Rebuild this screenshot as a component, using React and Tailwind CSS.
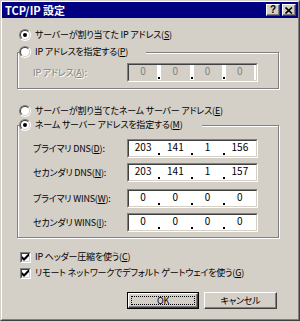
import React from "react"

function Radio({ checked }) {
  return (
    <span className="w-[12px] h-[12px] shrink-0 rounded-full border border-t-[#808080] border-l-[#808080] border-r-white border-b-white flex">
      <span className="flex-1 rounded-full border border-t-[#404040] border-l-[#404040] border-r-[#d4d0c8] border-b-[#d4d0c8] bg-white flex items-center justify-center">
        {checked && <span className="w-[4px] h-[4px] rounded-full bg-black" />}
      </span>
    </span>
  )
}

function Check() {
  return (
    <span className="w-[11px] h-[11px] shrink-0 border border-t-[#808080] border-l-[#808080] border-r-white border-b-white flex">
      <span className="flex-1 border border-t-[#404040] border-l-[#404040] border-r-[#d4d0c8] border-b-[#d4d0c8] bg-white flex items-center justify-center">
        <svg width="7" height="7" viewBox="0 0 7 7">
          <polygon points="0,2 2,4 7,-1 7,2 2,7 0,5" fill="#000" />
        </svg>
      </span>
    </span>
  )
}

function IpField({ parts, disabled }) {
  return (
    <div className="w-[131px] h-[19px] border border-t-[#808080] border-l-[#808080] border-r-white border-b-white text-[10px] tracking-normal">
      <div className="h-full border border-t-[#404040] border-l-[#404040] border-r-[#d4d0c8] border-b-[#d4d0c8] bg-white flex pr-[2px]">
        {parts.map((p, i) => (
          <React.Fragment key={i}>
            {i > 0 && (
              <div className="w-[4px] flex items-end justify-center pb-[1px]">
                <span className="w-[2px] h-[2px] bg-black" />
              </div>
            )}
            <div
              className={
                disabled
                  ? "flex-1 text-center leading-[12px] bg-[#d4d0c8] text-[#808080]"
                  : "flex-1 text-center leading-[12px]"
              }
            >
              {p}
            </div>
          </React.Fragment>
        ))}
      </div>
    </div>
  )
}

function AddrRow({ label, parts, disabled, className = "" }) {
  return (
    <div className={"flex items-center " + className}>
      <span
        className={
          disabled
            ? "w-[94px] leading-[14px] text-[#808080] [text-shadow:1px_1px_0_#fff]"
            : "w-[94px] leading-[14px]"
        }
      >
        {label}
      </span>
      <IpField parts={parts} disabled={disabled} />
    </div>
  )
}

function Button({ children, isDefault, width }) {
  return (
    <div className={"h-[17px] " + width + (isDefault ? " border border-black" : "")}>
      <div className="h-full border border-t-white border-l-white border-r-[#404040] border-b-[#404040] shadow-[inset_-1px_-1px_0_#808080] flex items-center justify-center p-[2px]">
        <div
          className={
            isDefault
              ? "w-full h-full flex items-center justify-center border border-dotted border-black leading-[10px]"
              : "w-full h-full flex items-center justify-center leading-[10px]"
          }
        >
          {children}
        </div>
      </div>
    </div>
  )
}

function CaptionButton({ children }) {
  return (
    <div className="w-[14px] h-[12px] bg-[#d4d0c8] border border-t-white border-l-white border-r-[#404040] border-b-[#404040] shadow-[inset_-1px_-1px_0_#808080] flex items-center justify-center">
      {children}
    </div>
  )
}

export default function App() {
  return (
    <div className="w-[300px] h-[321px] bg-[#d4d0c8] border border-t-[#d4d0c8] border-l-[#d4d0c8] border-r-[#404040] border-b-[#404040] font-['Noto_Sans_CJK_JP',sans-serif] text-[9px] tracking-[-0.2px] text-black [font-feature-settings:'palt']">
      <div className="h-full border border-t-white border-l-white border-r-[#808080] border-b-[#808080] flex flex-col">
        {/* title */}
        <div className="h-[16px] bg-[#000080] flex items-center pl-[3px] pr-[2px]">
          <span className="text-white font-bold text-[11px] tracking-normal leading-[14px] flex-1">TCP/IP 設定</span>
          <div className="flex gap-[2px]">
            <CaptionButton>
              <span className="font-bold text-[10px] leading-[10px] font-['Liberation_Sans',sans-serif]">?</span>
            </CaptionButton>
            <CaptionButton>
              <svg width="8" height="7" viewBox="0 0 8 7">
                <path d="M0.5 0.5 L7 6.5 M7 0.5 L0.5 6.5" stroke="#000" strokeWidth="1.6" />
              </svg>
            </CaptionButton>
          </div>
        </div>

        <div className="flex flex-col pl-[15px]">
          <div className="mt-[10px] pl-[2px] flex items-center gap-[4px] leading-[14px]">
            <Radio checked />
            <span>サーバーが割り当てた IP アドレス(<u>S</u>)</span>
          </div>

          <fieldset className="mt-[3px] w-[262px] border border-[#808080] shadow-[inset_1px_1px_0_#fff,1px_1px_0_#fff] p-0">
            <legend className="ml-[1px] p-0 pr-[18px] bg-[#d4d0c8]">
              <span className="flex items-center gap-[4px] leading-[14px]">
                <Radio />
                <span>IP アドレスを指定する(<u>P</u>)</span>
              </span>
            </legend>
            <div className="pt-[4px] pb-[6px] pl-[15px]">
              <AddrRow label={<>IP アドレス(<u>A</u>):</>} parts={["0", "0", "0", "0"]} disabled />
            </div>
          </fieldset>

          <div className="mt-[15px] pl-[2px] flex items-center gap-[4px] leading-[14px]">
            <Radio />
            <span>サーバーが割り当てたネーム サーバー アドレス(<u>E</u>)</span>
          </div>

          <fieldset className="w-[262px] border border-[#808080] shadow-[inset_1px_1px_0_#fff,1px_1px_0_#fff] p-0">
            <legend className="ml-[1px] p-0 pr-[19px] bg-[#d4d0c8]">
              <span className="flex items-center gap-[4px] leading-[14px]">
                <Radio checked />
                <span>ネーム サーバー アドレスを指定する(<u>M</u>)</span>
              </span>
            </legend>
            <div className="pt-[7px] pb-[5px] pl-[15px] flex flex-col">
              <AddrRow label={<>プライマリ DNS(<u>D</u>):</>} parts={["203", "141", "1", "156"]} />
              <AddrRow className="mt-[5px]" label={<>セカンダリ DNS(<u>N</u>):</>} parts={["203", "141", "1", "157"]} />
              <AddrRow className="mt-[7px]" label={<>プライマリ WINS(<u>W</u>):</>} parts={["0", "0", "0", "0"]} />
              <AddrRow className="mt-[5px]" label={<>セカンダリ WINS(<u>I</u>):</>} parts={["0", "0", "0", "0"]} />
            </div>
          </fieldset>

          <div className="mt-[12px] pl-[3px] flex items-center gap-[4px] leading-[14px]">
            <Check />
            <span>IP ヘッダー圧縮を使う(<u>C</u>)</span>
          </div>
          <div className="mt-[2px] pl-[3px] flex items-center gap-[4px] leading-[14px]">
            <Check />
            <span>リモート ネットワークでデフォルト ゲートウェイを使う(<u>G</u>)</span>
          </div>

          <div className="mt-[12px] ml-[110px] flex gap-[5px]">
            <Button isDefault width="w-[72px]">OK</Button>
            <Button width="w-[73px]">キャンセル</Button>
          </div>
        </div>
      </div>
    </div>
  )
}
